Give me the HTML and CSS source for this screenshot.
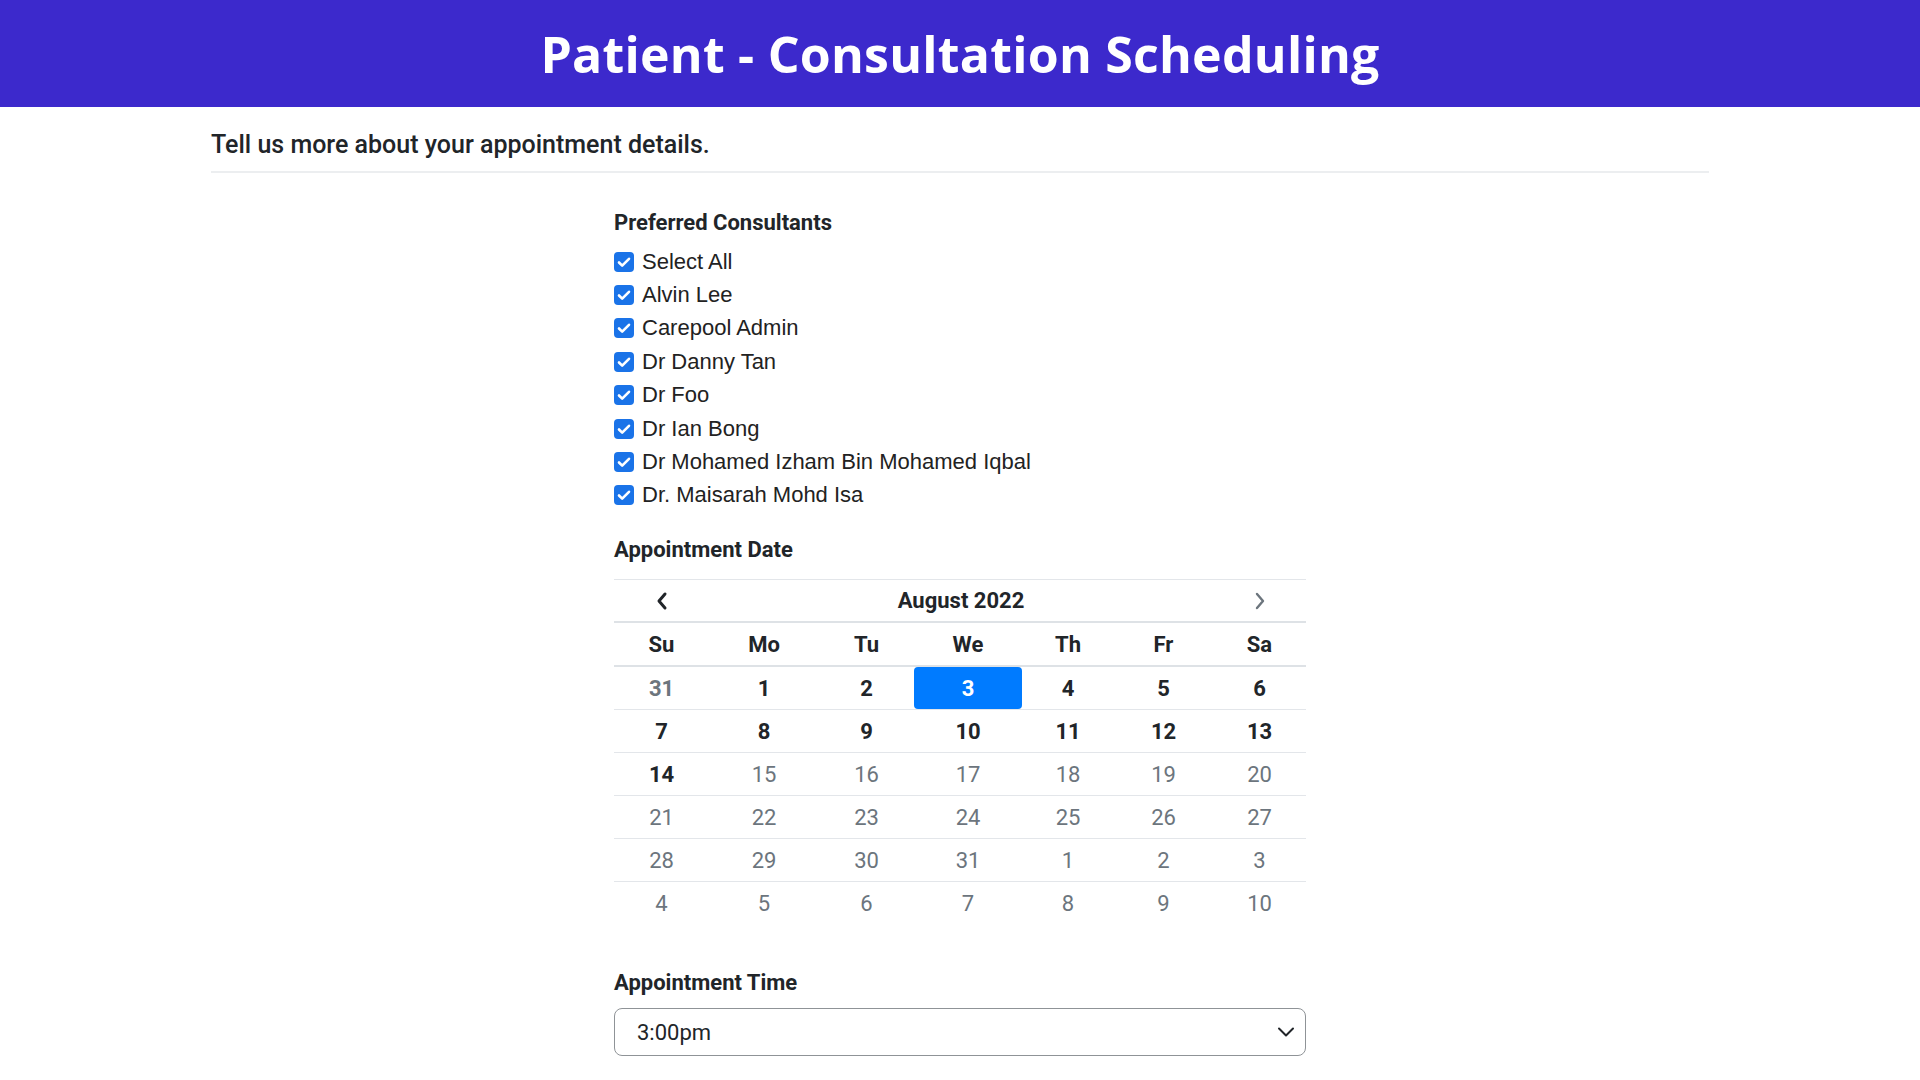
FILE: index.html
```html
<!DOCTYPE html>
<html lang="en">
<head>
<meta charset="utf-8">
<title>Patient - Consultation Scheduling</title>
<link rel="stylesheet" href="styles.css">
</head>
<body>
<header class="topbar">
  <h1 class="title">Patient - Consultation Scheduling</h1>
</header>
<main class="container">
  <p class="intro">Tell us more about your appointment details.</p>
  <hr class="divider">
  <section class="form">
    <h2 class="label">Preferred Consultants</h2>
    <ul class="checks">
      <li class="check"><span class="box"><svg viewBox="0 0 20 20" width="20" height="20"><path d="M5 10.5l3.2 3.2L15 6.8" fill="none" stroke="#fff" stroke-width="2.6" stroke-linecap="round" stroke-linejoin="round"/></svg></span>Select All</li>
      <li class="check"><span class="box"><svg viewBox="0 0 20 20" width="20" height="20"><path d="M5 10.5l3.2 3.2L15 6.8" fill="none" stroke="#fff" stroke-width="2.6" stroke-linecap="round" stroke-linejoin="round"/></svg></span>Alvin Lee</li>
      <li class="check"><span class="box"><svg viewBox="0 0 20 20" width="20" height="20"><path d="M5 10.5l3.2 3.2L15 6.8" fill="none" stroke="#fff" stroke-width="2.6" stroke-linecap="round" stroke-linejoin="round"/></svg></span>Carepool Admin</li>
      <li class="check"><span class="box"><svg viewBox="0 0 20 20" width="20" height="20"><path d="M5 10.5l3.2 3.2L15 6.8" fill="none" stroke="#fff" stroke-width="2.6" stroke-linecap="round" stroke-linejoin="round"/></svg></span>Dr Danny Tan</li>
      <li class="check"><span class="box"><svg viewBox="0 0 20 20" width="20" height="20"><path d="M5 10.5l3.2 3.2L15 6.8" fill="none" stroke="#fff" stroke-width="2.6" stroke-linecap="round" stroke-linejoin="round"/></svg></span>Dr Foo</li>
      <li class="check"><span class="box"><svg viewBox="0 0 20 20" width="20" height="20"><path d="M5 10.5l3.2 3.2L15 6.8" fill="none" stroke="#fff" stroke-width="2.6" stroke-linecap="round" stroke-linejoin="round"/></svg></span>Dr Ian Bong</li>
      <li class="check"><span class="box"><svg viewBox="0 0 20 20" width="20" height="20"><path d="M5 10.5l3.2 3.2L15 6.8" fill="none" stroke="#fff" stroke-width="2.6" stroke-linecap="round" stroke-linejoin="round"/></svg></span>Dr Mohamed Izham Bin Mohamed Iqbal</li>
      <li class="check"><span class="box"><svg viewBox="0 0 20 20" width="20" height="20"><path d="M5 10.5l3.2 3.2L15 6.8" fill="none" stroke="#fff" stroke-width="2.6" stroke-linecap="round" stroke-linejoin="round"/></svg></span>Dr. Maisarah Mohd Isa</li>
    </ul>

    <h2 class="label label-date">Appointment Date</h2>
    <div class="calendar">
      <div class="cal-head">
        <span class="nav prev"><svg viewBox="0 0 12 20" width="12" height="20"><path d="M9 3L3 10l6 7" fill="none" stroke="#212529" stroke-width="3" stroke-linecap="round" stroke-linejoin="round"/></svg></span>
        <span class="month">August 2022</span>
        <span class="nav next"><svg viewBox="0 0 12 20" width="12" height="20"><path d="M3 3l6 7-6 7" fill="none" stroke="#6c757d" stroke-width="2.4" stroke-linecap="round" stroke-linejoin="round"/></svg></span>
      </div>
      <div class="row dow">
        <span>Su</span><span>Mo</span><span>Tu</span><span>We</span><span>Th</span><span>Fr</span><span>Sa</span>
      </div>
      <div class="row">
        <span class="d old">31</span><span class="d on">1</span><span class="d on">2</span><span class="d on sel">3</span><span class="d on">4</span><span class="d on">5</span><span class="d on">6</span>
      </div>
      <div class="row">
        <span class="d on">7</span><span class="d on">8</span><span class="d on">9</span><span class="d on">10</span><span class="d on">11</span><span class="d on">12</span><span class="d on">13</span>
      </div>
      <div class="row">
        <span class="d on">14</span><span class="d">15</span><span class="d">16</span><span class="d">17</span><span class="d">18</span><span class="d">19</span><span class="d">20</span>
      </div>
      <div class="row">
        <span class="d">21</span><span class="d">22</span><span class="d">23</span><span class="d">24</span><span class="d">25</span><span class="d">26</span><span class="d">27</span>
      </div>
      <div class="row">
        <span class="d">28</span><span class="d">29</span><span class="d">30</span><span class="d">31</span><span class="d">1</span><span class="d">2</span><span class="d">3</span>
      </div>
      <div class="row last">
        <span class="d">4</span><span class="d">5</span><span class="d">6</span><span class="d">7</span><span class="d">8</span><span class="d">9</span><span class="d">10</span>
      </div>
    </div>

    <h2 class="label label-time">Appointment Time</h2>
    <div class="select">
      <span class="select-value">3:00pm</span>
      <svg class="chev" viewBox="0 0 18 12" width="18" height="12"><path d="M2 2.5l7 7 7-7" fill="none" stroke="#212529" stroke-width="2" stroke-linecap="round" stroke-linejoin="round"/></svg>
    </div>
  </section>
</main>
</body>
</html>
```

FILE: styles.css
```css
* { box-sizing: border-box; }

html, body {
  margin: 0;
  padding: 0;
  background: #ffffff;
  font-family: Roboto, "Liberation Sans", Arial, sans-serif;
  color: #212529;
}

.topbar {
  height: 107px;
  background: #3c29cc;
  display: flex;
  align-items: center;
  justify-content: center;
}

.title {
  margin: 0;
  font-family: "Open Sans", "Liberation Sans", sans-serif;
  font-weight: 700;
  font-size: 50px;
  line-height: 1;
  color: #ffffff;
  letter-spacing: 0.25px;
}

.container {
  width: 1498px;
  margin: 0 auto;
}

.intro {
  margin: 0;
  padding-top: 24px;
  font-size: 25px;
  font-weight: 500;
  line-height: 28px;
  color: #212529;
}

.divider {
  margin: 12px 0 0;
  border: 0;
  height: 2px;
  background: #eceef0;
}

.form {
  width: 692px;
  margin: 0 auto;
  padding-top: 38px;
}

.label {
  margin: 0;
  font-size: 22px;
  font-weight: 700;
  line-height: 24px;
  color: #212529;
}

.checks {
  list-style: none;
  margin: 10px 0 0;
  padding: 0;
}

.check {
  height: 33.4px;
  display: flex;
  align-items: center;
  gap: 8px;
  font-family: "Liberation Sans", Arial, sans-serif;
  font-size: 22px;
  color: #222222;
}

.box {
  width: 20px;
  height: 20px;
  border-radius: 4px;
  background: #1a73e8;
  display: flex;
  flex: none;
}

.label-date { margin-top: 26px; }

.calendar {
  margin-top: 17px;
  border-top: 1px solid #e3e6ea;
}

.cal-head {
  height: 43px;
  display: grid;
  grid-template-columns: 95px 1fr 93px;
  align-items: center;
  border-bottom: 2px solid #dee2e6;
}

.nav {
  display: flex;
  justify-content: center;
  align-items: center;
}

.month {
  text-align: center;
  font-size: 22px;
  font-weight: 700;
}

.row {
  display: grid;
  grid-template-columns: 95px 110px 95px 108px 92px 99px 93px;
  height: 43px;
  border-bottom: 1px solid #e3e6ea;
}

.row.last { border-bottom: 0; height: 42px; }

.row > span {
  display: flex;
  align-items: center;
  justify-content: center;
  font-size: 22px;
}

.dow {
  height: 44px;
  border-bottom: 2px solid #dee2e6;
}

.dow > span { font-weight: 700; color: #212529; }

.d { color: #6c757d; }
.d.on { color: #212529; font-weight: 700; }
.d.old { color: #6c757d; font-weight: 700; }
.d.sel {
  background: #007bff;
  color: #ffffff;
  border-radius: 4px;
}

.label-time { margin-top: 47px; }

.select {
  margin-top: 13px;
  height: 48px;
  border: 1px solid #8f9397;
  border-radius: 8px;
  display: flex;
  align-items: center;
  justify-content: space-between;
  padding: 0 10px 0 22px;
  font-size: 22px;
  color: #212529;
}
```
